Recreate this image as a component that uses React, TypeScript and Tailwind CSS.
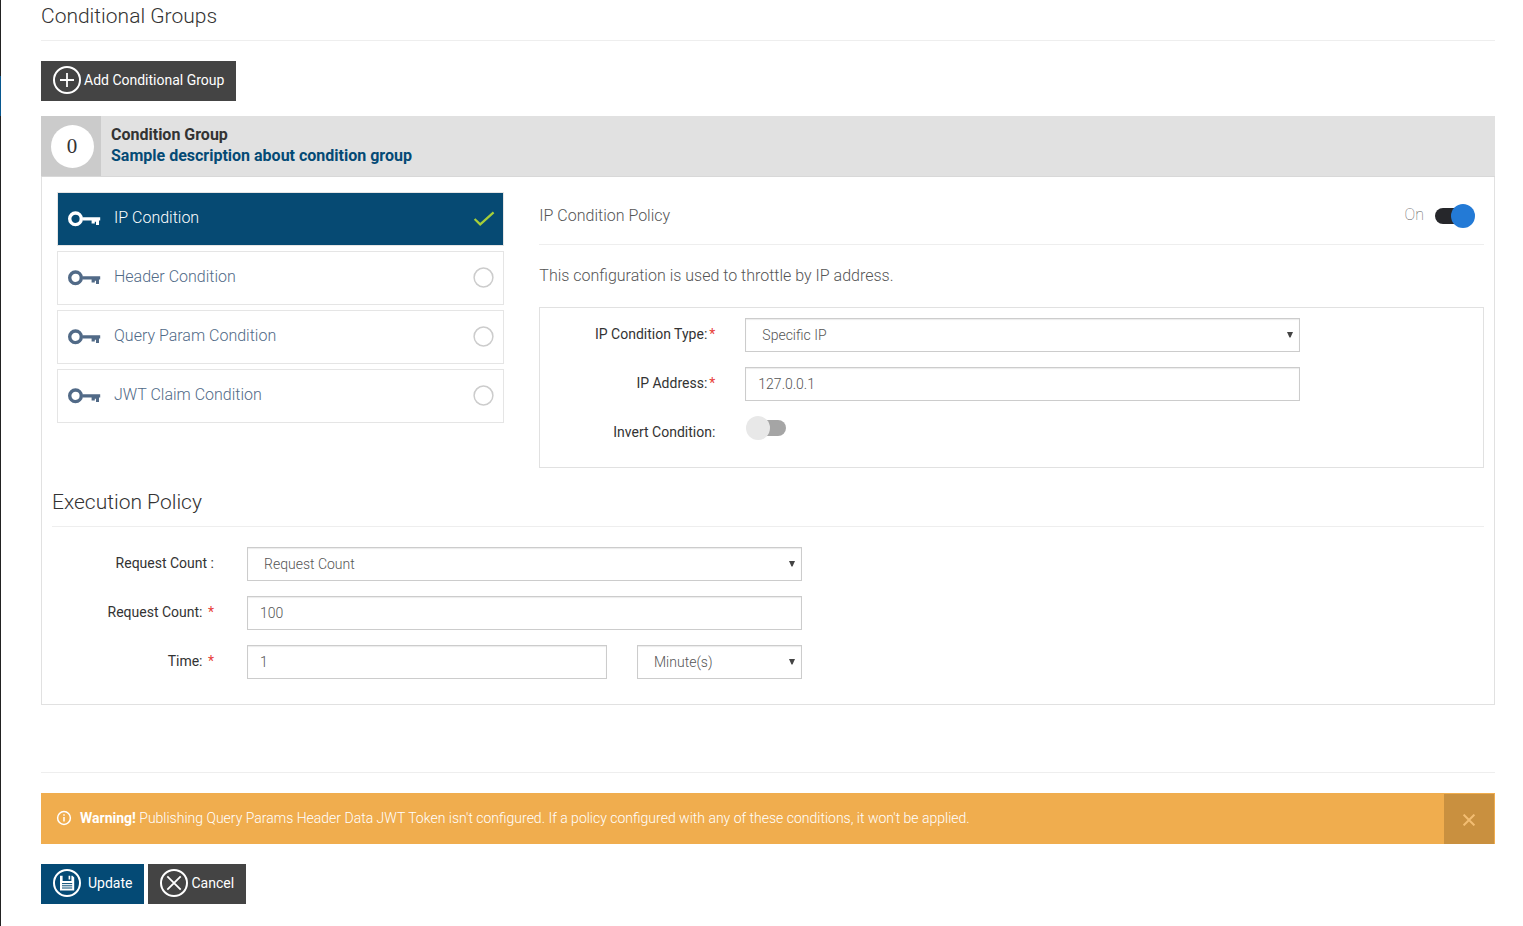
import { useState } from "react";
import type { ComponentProps, ReactNode } from "react";
import clsx from "clsx";

const conditions = ["IP Condition", "Header Condition", "Query Param Condition", "JWT Claim Condition"];

const fieldClass =
    "block h-[34px] w-full appearance-none border border-[#ccc] bg-white text-sm font-light text-[#555] shadow-[inset_0_1px_1px_rgba(0,0,0,0.08)] outline-none focus:border-[#66afe9]";

// Icons
function KeyIcon() {
    return (
        <svg width="33" height="16" viewBox="0 0 33 16" className="shrink-0" aria-hidden="true">
            <circle cx="7.5" cy="7.8" r="5.8" fill="none" stroke="currentColor" strokeWidth="3.4" />
            <path
                d="M14.3 6.3H32.2V9.6H31V14H28V10.8H26.8V12.6H23.6V9.4H14.3Z"
                fill="currentColor"
            />
        </svg>
    );
}

function CircleIcon({ children }: { children: ReactNode }) {
    return (
        <svg
            width="28"
            height="28"
            viewBox="0 0 28 28"
            fill="none"
            stroke="currentColor"
            strokeWidth="1.8"
            className="shrink-0"
            aria-hidden="true"
        >
            <circle cx="14" cy="14" r="13" strokeWidth="2" />
            {children}
        </svg>
    );
}

// Form controls
function TextField({ className, ...props }: ComponentProps<"input">) {
    return <input type="text" className={clsx(fieldClass, "px-3", className)} {...props} />;
}

function SelectField({ className, options, ...props }: ComponentProps<"select"> & { options: string[] }) {
    return (
        <div className={clsx("relative w-full", className)}>
            <select className={clsx(fieldClass, "px-4")} {...props}>
                {options.map((option) => (
                    <option key={option}>{option}</option>
                ))}
            </select>
            <svg
                width="6"
                height="6"
                viewBox="0 0 6 6"
                className="pointer-events-none absolute top-3.5 right-[7px] text-[#444]"
                aria-hidden="true"
            >
                <path d="M0 0H6L3.5 5.6H2.5Z" fill="currentColor" />
            </svg>
        </div>
    );
}

function Toggle(props: ComponentProps<"input">) {
    return (
        <input
            type="checkbox"
            className="relative h-6 w-10 shrink-0 cursor-pointer appearance-none before:absolute before:inset-y-1 before:right-0 before:left-1 before:rounded-full before:bg-[#a5a5a5] after:absolute after:top-0 after:left-0 after:size-6 after:rounded-full after:bg-[#e8e8e8] checked:before:right-1 checked:before:left-0 checked:before:bg-[#26272b] checked:after:left-4 checked:after:bg-[#237ad6]"
            {...props}
        />
    );
}

function Required() {
    return <span className="ml-0.5 text-[#e8413a]">*</span>;
}

export default function App() {
    const [selected, setSelected] = useState("IP Condition");
    const [enabled, setEnabled] = useState(true);
    const [showWarning, setShowWarning] = useState(true);

    return (
        <div className="flex min-h-screen bg-white font-['Roboto',sans-serif] text-sm text-[#333]">
            {/* Edge of the collapsed side menu */}
            <div className="flex w-px shrink-0 flex-col bg-[#222]">
                <div className="mt-19 h-10 bg-[#07578f]" />
            </div>

            <main className="min-w-0 flex-1 pr-7 pb-5 pl-10">
                <h2 className="border-b border-[#eee] pt-1 pb-3 text-[21px] leading-6 font-light">Conditional Groups</h2>

                <button
                    type="button"
                    className="mt-5 flex h-10 items-center gap-[3px] bg-[#444] px-3 pb-0.5 text-white hover:bg-[#333]"
                >
                    <CircleIcon>
                        <path d="M14 7V21M7 14H21" />
                    </CircleIcon>
                    Add Conditional Group
                </button>

                <section className="mt-[15px] border border-[#e1e1e1]">
                    <header className="-mx-px -mt-px flex border-b border-[#d8d8d8] bg-[#e1e1e1]">
                        <div className="flex size-15 items-center justify-center bg-[#cbcbcb] pl-0.5">
                            <span className="flex size-[43px] items-center justify-center rounded-full bg-white font-['Liberation_Serif',serif] text-[21px]">
                                0
                            </span>
                        </div>
                        <div className="px-2.5 pt-2 text-base leading-[21px] font-bold">
                            <h3>Condition Group</h3>
                            <a href="#description" className="text-[#044a75]">
                                Sample description about condition group
                            </a>
                        </div>
                    </header>

                    <div className="px-2.5 pt-[15px] pb-[25px]">
                        <div className="flex">
                            <ul className="flex w-1/3 flex-col gap-[5px] pr-[25px] pl-[5px]">
                                {conditions.map((name) => (
                                    <li key={name}>
                                        <button
                                            type="button"
                                            onClick={() => setSelected(name)}
                                            className={clsx(
                                                "flex h-[54px] w-full items-center border border-[#e5e5e5] pr-2 pl-2.5 text-left text-base font-light",
                                                selected === name ? "bg-[#064a73] text-white" : "bg-white text-[#516a87]"
                                            )}
                                        >
                                            <KeyIcon />
                                            <span className="ml-[13px] flex-1 pb-0.5">{name}</span>
                                            <svg
                                                width="22"
                                                height="22"
                                                viewBox="0 0 22 22"
                                                fill="none"
                                                className="shrink-0"
                                                aria-hidden="true"
                                            >
                                                {selected === name ? (
                                                    <path d="M1.6 11L7.2 16.4L20.6 4.4" stroke="#a6ce39" strokeWidth="2.2" />
                                                ) : (
                                                    <circle cx="10.5" cy="10.5" r="9.4" stroke="#ccc" strokeWidth="1.5" />
                                                )}
                                            </svg>
                                        </button>
                                    </li>
                                ))}
                            </ul>

                            <div className="w-2/3 pl-2.5">
                                <div className="flex h-[53px] items-center justify-between border-b border-[#eee] pr-[9px] pb-1 text-base font-light">
                                    <h4 className="text-[#555]">IP Condition Policy</h4>
                                    <label className="flex items-center gap-[11px] font-thin text-[#555]">
                                        <span className="pb-0.5">{enabled ? "On" : "Off"}</span>
                                        <Toggle checked={enabled} onChange={(e) => setEnabled(e.target.checked)} />
                                    </label>
                                </div>
                                <p className="pt-[19px] pb-[19px] text-base font-light text-[#555]">
                                    This configuration is used to throttle by IP address.
                                </p>
                                <div className="space-y-[15px] border border-[#e1e1e1] py-2.5">
                                    <div className="flex gap-[30px] pr-2.5">
                                        <label htmlFor="ipType" className="w-[175px] shrink-0 pt-1.5 text-right">
                                            IP Condition Type:
                                            <Required />
                                        </label>
                                        <SelectField
                                            id="ipType"
                                            className="max-w-[555px]"
                                            options={["Specific IP", "IP Range"]}
                                        />
                                    </div>
                                    <div className="flex gap-[30px] pr-2.5">
                                        <label htmlFor="ipAddress" className="w-[175px] shrink-0 pt-1.5 text-right">
                                            IP Address:
                                            <Required />
                                        </label>
                                        <TextField id="ipAddress" className="max-w-[555px]" defaultValue="127.0.0.1" />
                                    </div>
                                    <div className="flex h-[41px] gap-[31px]">
                                        <label htmlFor="invert" className="w-[175px] shrink-0 pt-1.5 text-right">
                                            Invert Condition:
                                        </label>
                                        <Toggle id="invert" />
                                    </div>
                                </div>
                            </div>
                        </div>

                        <h2 className="mb-5 border-b border-[#eee] pt-[22px] pb-3 text-[21px] leading-6 font-light">
                            Execution Policy
                        </h2>

                        <div className="space-y-[15px]">
                            <div className="flex gap-[33px]">
                                <label htmlFor="quota" className="w-[162px] shrink-0 pt-1.5 text-right">
                                    Request Count :
                                </label>
                                <SelectField
                                    id="quota"
                                    className="max-w-[555px]"
                                    options={["Request Count", "Request Bandwidth"]}
                                />
                            </div>
                            <div className="flex gap-[33px]">
                                <label htmlFor="count" className="w-[162px] shrink-0 pt-1.5 text-right">
                                    Request Count: <Required />
                                </label>
                                <TextField id="count" className="max-w-[555px]" defaultValue="100" />
                            </div>
                            <div className="flex gap-[33px]">
                                <label htmlFor="time" className="w-[162px] shrink-0 pt-1.5 text-right">
                                    Time: <Required />
                                </label>
                                <div className="flex w-full max-w-[555px] gap-[30px]">
                                    <TextField id="time" defaultValue="1" />
                                    <SelectField
                                        aria-label="Time unit"
                                        className="max-w-[165px] shrink-0"
                                        options={["Minute(s)", "Hour(s)", "Day(s)"]}
                                    />
                                </div>
                            </div>
                        </div>
                    </div>
                </section>

                <hr className="mt-[67px] mb-5 border-[#eee]" />

                {showWarning && (
                    <div role="alert" className="mb-5 flex h-[51px] bg-[#f0ad4e] pt-px pr-px text-white">
                        <div className="flex flex-1 items-center pb-0.5 pl-[15px] font-light">
                            <svg
                                width="16"
                                height="16"
                                viewBox="0 0 16 16"
                                fill="none"
                                stroke="currentColor"
                                strokeWidth="1.5"
                                className="mr-2 shrink-0"
                                aria-hidden="true"
                            >
                                <circle cx="8" cy="8" r="6.4" />
                                <path d="M8 7V11.5M8 4.3V5.8" />
                            </svg>
                            <p>
                                <strong className="font-bold">Warning!</strong> Publishing Query Params Header Data JWT Token
                                isn't configured. If a policy configured with any of these conditions, it won't be applied.
                            </p>
                        </div>
                        <button
                            type="button"
                            aria-label="Dismiss"
                            onClick={() => setShowWarning(false)}
                            className="flex w-[50px] items-center justify-center bg-[#c9903f] pt-0.5 text-[#f3bd72]"
                        >
                            <svg width="12" height="12" viewBox="0 0 12 12" stroke="currentColor" strokeWidth="2" aria-hidden="true">
                                <path d="M0.6 0.6L11.4 11.4M11.4 0.6L0.6 11.4" />
                            </svg>
                        </button>
                    </div>
                )}

                <div className="flex gap-1">
                    <button
                        type="button"
                        className="flex h-10 items-center gap-[7px] bg-[#044a75] px-3 pb-0.5 text-white hover:bg-[#033a5c]"
                    >
                        <CircleIcon>
                            <path
                                d="M7 6.8H9.6V12H18.4V6.8H19.4L21.2 8.6V21.4H7Z M15.6 6.8H17.2V10.6H15.6Z"
                                fill="currentColor"
                                stroke="none"
                            />
                            <path d="M9 14.6H19.2M9 16.8H19.2M9 19H19.2" stroke="#044a75" strokeWidth="1" />
                        </CircleIcon>
                        Update
                    </button>
                    <button
                        type="button"
                        className="flex h-10 items-center gap-[3px] bg-[#444] px-3 pb-0.5 text-white hover:bg-[#333]"
                    >
                        <CircleIcon>
                            <path d="M7.3 7.3L20.7 20.7M20.7 7.3L7.3 20.7" />
                        </CircleIcon>
                        Cancel
                    </button>
                </div>
            </main>
        </div>
    );
}
